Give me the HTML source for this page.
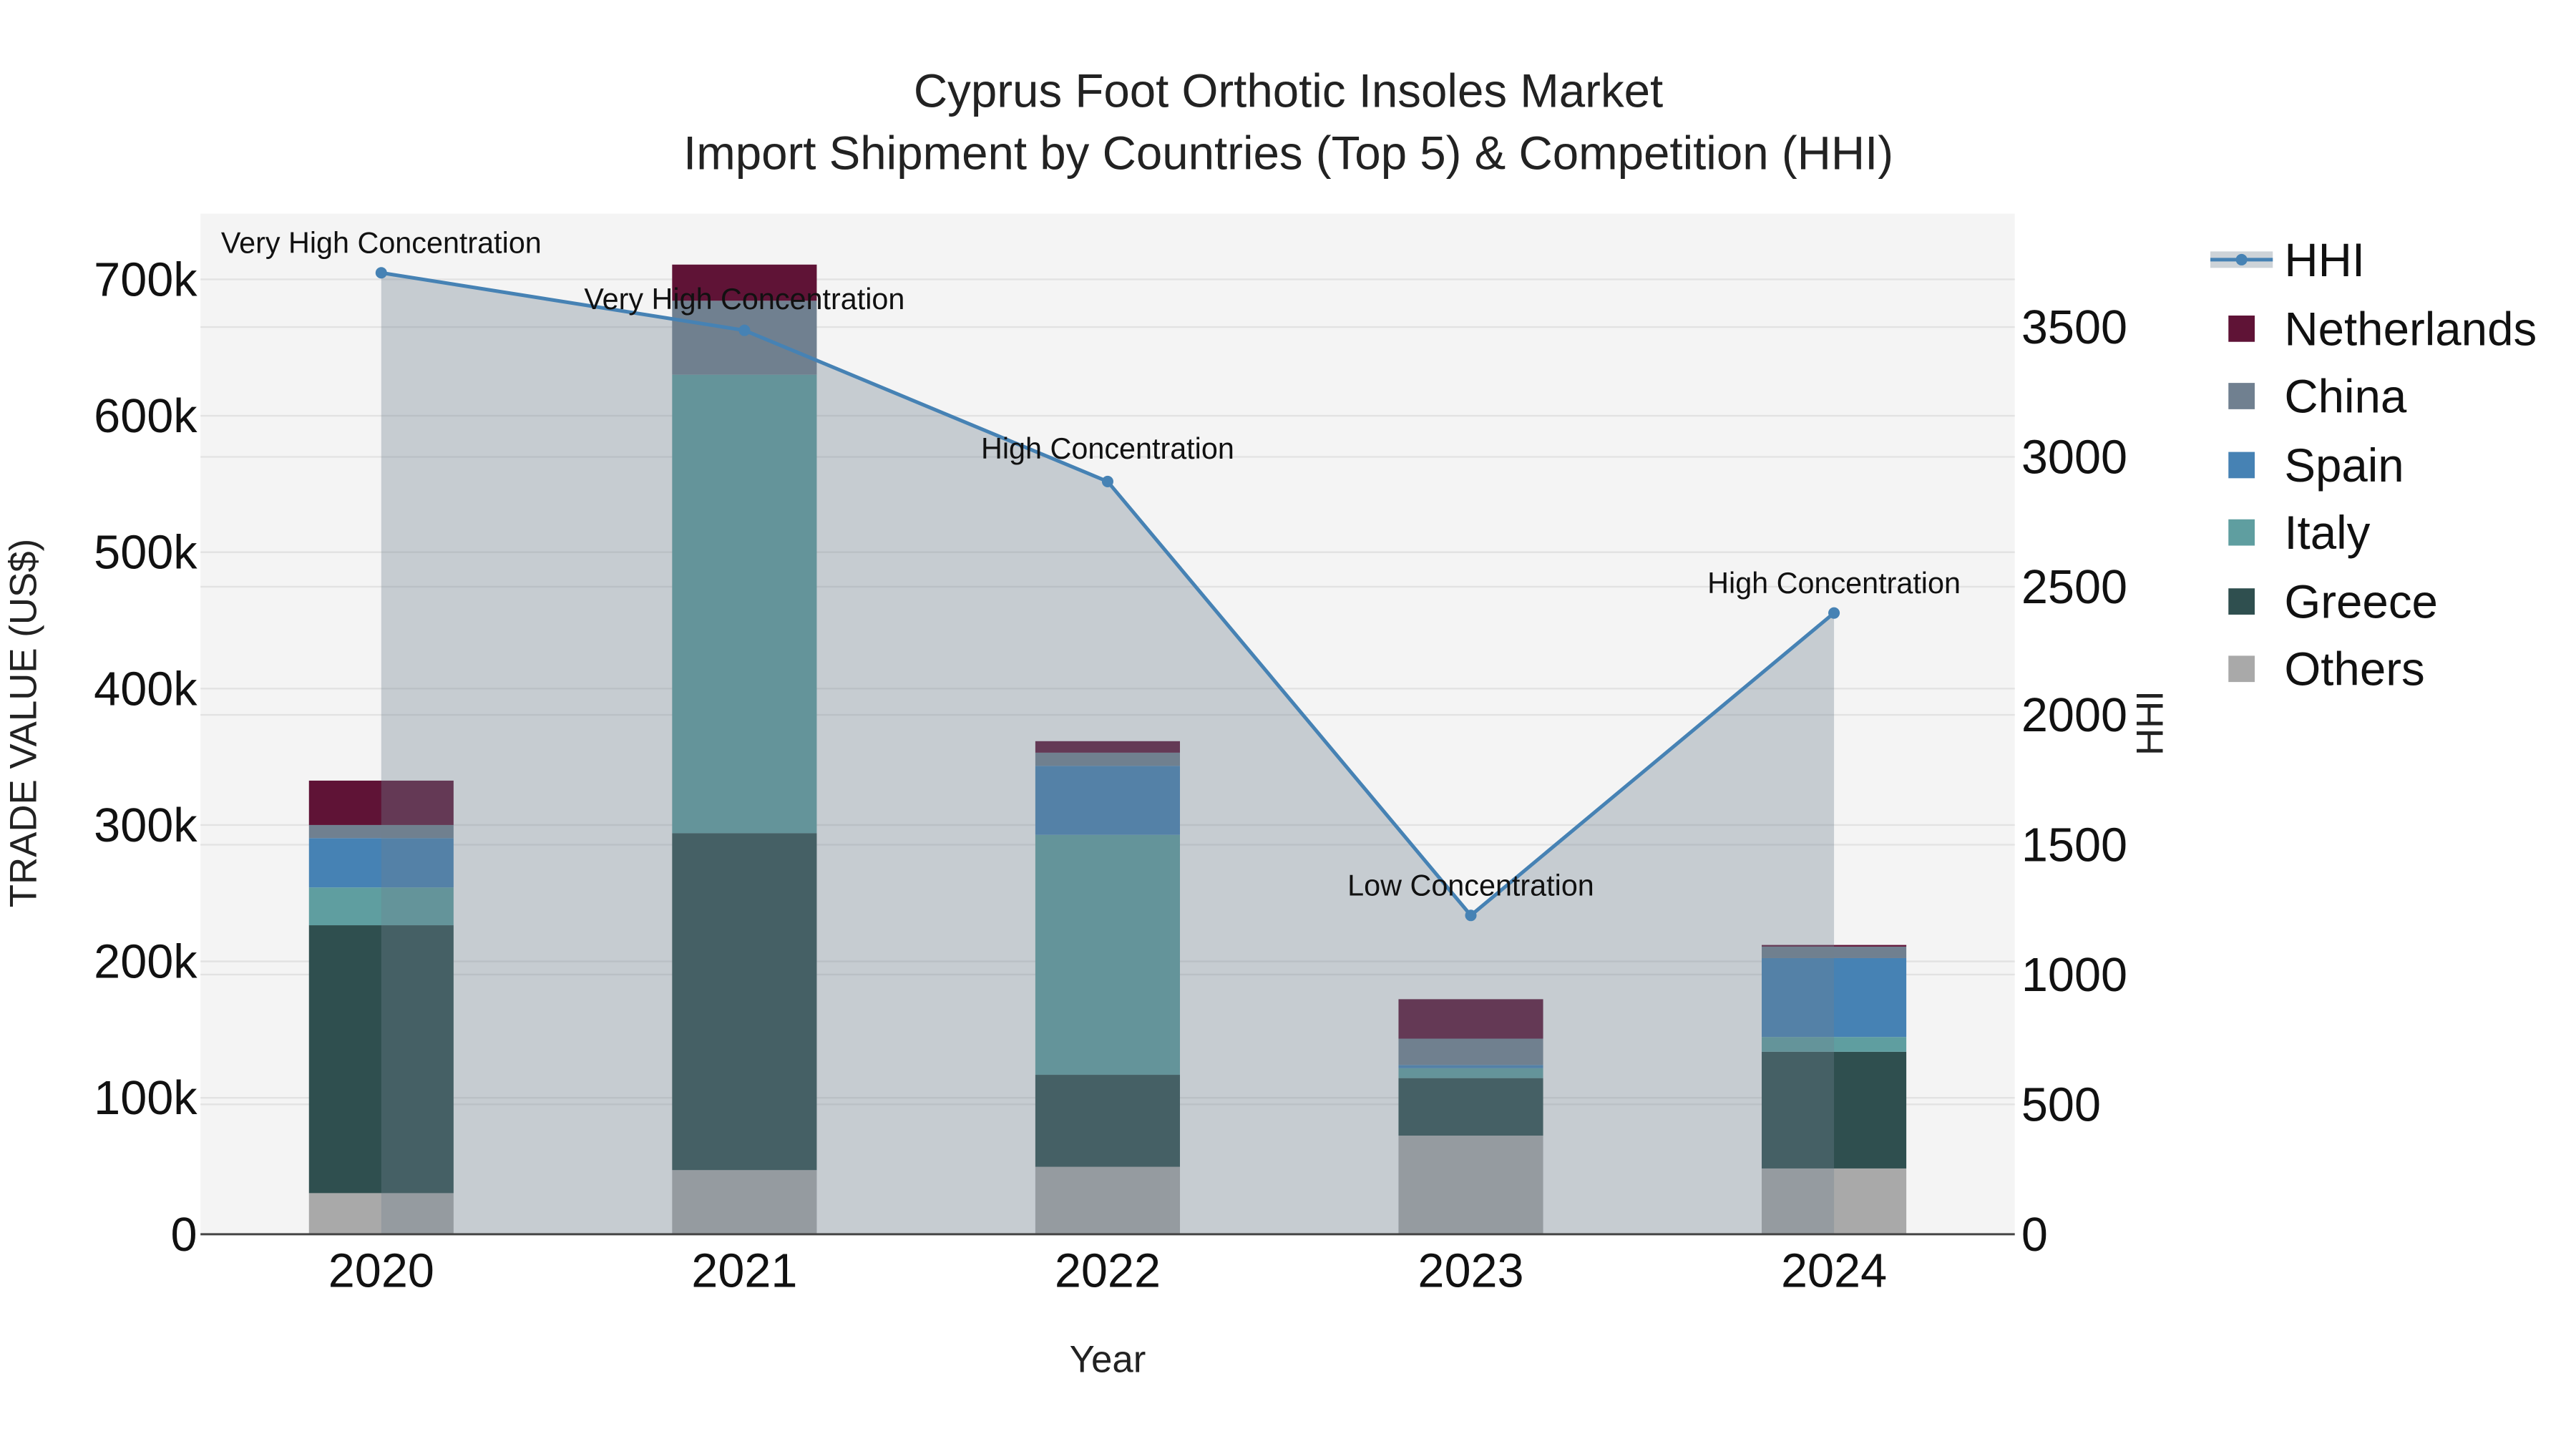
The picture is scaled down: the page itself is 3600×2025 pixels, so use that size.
<!DOCTYPE html>
<html><head><meta charset="utf-8"><style>
html,body{margin:0;padding:0;background:#fff;}
svg{display:block;font-family:"Liberation Sans",Arial,sans-serif;}
</style></head><body>
<svg width="3600" height="2025" viewBox="0 0 1567.5 881.7" preserveAspectRatio="none" xmlns="http://www.w3.org/2000/svg">
<rect x="0" y="0" width="1567.5" height="881.7" fill="#fff"/>
<rect x="122" y="130" width="1104" height="621" fill="#f4f4f4"/>
<g stroke="#e2e2e2" stroke-width="1">
<line x1="122" x2="1226" y1="668" y2="668"/><line x1="122" x2="1226" y1="585" y2="585"/>
<line x1="122" x2="1226" y1="502" y2="502"/><line x1="122" x2="1226" y1="419" y2="419"/>
<line x1="122" x2="1226" y1="336" y2="336"/><line x1="122" x2="1226" y1="253" y2="253"/>
<line x1="122" x2="1226" y1="170" y2="170"/>
<line x1="122" x2="1226" y1="672" y2="672"/><line x1="122" x2="1226" y1="593" y2="593"/>
<line x1="122" x2="1226" y1="514" y2="514"/><line x1="122" x2="1226" y1="435" y2="435"/>
<line x1="122" x2="1226" y1="357" y2="357"/><line x1="122" x2="1226" y1="278" y2="278"/>
<line x1="122" x2="1226" y1="199" y2="199"/>
</g>
<g>
<rect x="188" y="726" width="88" height="25" fill="#a9a9a9"/>
<rect x="188" y="563" width="88" height="163" fill="#2f4f4f"/>
<rect x="188" y="540" width="88" height="23" fill="#5f9ea0"/>
<rect x="188" y="510" width="88" height="30" fill="#4682b4"/>
<rect x="188" y="502" width="88" height="8" fill="#708090"/>
<rect x="188" y="475" width="88" height="27" fill="#5f1336"/>

<rect x="409" y="712" width="88" height="39" fill="#a9a9a9"/>
<rect x="409" y="507" width="88" height="205" fill="#2f4f4f"/>
<rect x="409" y="228" width="88" height="279" fill="#5f9ea0"/>
<rect x="409" y="183" width="88" height="45" fill="#708090"/>
<rect x="409" y="161" width="88" height="22" fill="#5f1336"/>

<rect x="630" y="710" width="88" height="41" fill="#a9a9a9"/>
<rect x="630" y="654" width="88" height="56" fill="#2f4f4f"/>
<rect x="630" y="508" width="88" height="146" fill="#5f9ea0"/>
<rect x="630" y="466" width="88" height="42" fill="#4682b4"/>
<rect x="630" y="458" width="88" height="8" fill="#708090"/>
<rect x="630" y="451" width="88" height="7" fill="#5f1336"/>

<rect x="851" y="691" width="88" height="60" fill="#a9a9a9"/>
<rect x="851" y="656" width="88" height="35" fill="#2f4f4f"/>
<rect x="851" y="650" width="88" height="6" fill="#5f9ea0"/>
<rect x="851" y="648" width="88" height="2" fill="#4682b4"/>
<rect x="851" y="632" width="88" height="16" fill="#708090"/>
<rect x="851" y="608" width="88" height="24" fill="#5f1336"/>

<rect x="1072" y="711" width="88" height="40" fill="#a9a9a9"/>
<rect x="1072" y="640" width="88" height="71" fill="#2f4f4f"/>
<rect x="1072" y="631" width="88" height="9" fill="#5f9ea0"/>
<rect x="1072" y="583" width="88" height="48" fill="#4682b4"/>
<rect x="1072" y="576" width="88" height="7" fill="#708090"/>
<rect x="1072" y="575" width="88" height="1" fill="#5f1336"/>
</g>
<polygon points="232,751 232,166 453,201 674,293 895,557 1116,373 1116,751" fill="rgba(112,128,144,0.35)"/>
<polyline points="232,166 453,201 674,293 895,557 1116,373" fill="none" stroke="#4682b4" stroke-width="2.2"/>
<g fill="#4682b4">
<circle cx="232" cy="166" r="3.5"/><circle cx="453" cy="201" r="3.5"/><circle cx="674" cy="293" r="3.5"/><circle cx="895" cy="557" r="3.5"/><circle cx="1116" cy="373" r="3.5"/>
</g>
<line x1="122" x2="1226" y1="751" y2="751" stroke="#444" stroke-width="1.3"/>
<g font-size="18" fill="#111" text-anchor="middle">
<text x="232" y="154">Very High Concentration</text>
<text x="453" y="188">Very High Concentration</text>
<text x="674" y="279">High Concentration</text>
<text x="895" y="545">Low Concentration</text>
<text x="1116" y="361">High Concentration</text>
</g>
<g text-anchor="middle" fill="#222" font-size="28.5">
<text x="784" y="65">Cyprus Foot Orthotic Insoles Market</text>
<text x="784" y="103">Import Shipment by Countries (Top 5) &amp; Competition (HHI)</text>
</g>
<g text-anchor="end" font-size="29" fill="#111">
<text x="120" y="761">0</text><text x="120" y="678">100k</text><text x="120" y="595">200k</text>
<text x="120" y="512">300k</text><text x="120" y="429">400k</text><text x="120" y="346">500k</text>
<text x="120" y="263">600k</text><text x="120" y="180">700k</text>
</g>
<g text-anchor="start" font-size="29" fill="#111">
<text x="1230" y="761">0</text><text x="1230" y="682">500</text><text x="1230" y="603">1000</text>
<text x="1230" y="524">1500</text><text x="1230" y="445">2000</text><text x="1230" y="367">2500</text>
<text x="1230" y="288">3000</text><text x="1230" y="209">3500</text>
</g>
<g text-anchor="middle" font-size="29" fill="#111">
<text x="232" y="783">2020</text><text x="453" y="783">2021</text><text x="674" y="783">2022</text>
<text x="895" y="783">2023</text><text x="1116" y="783">2024</text>
</g>
<text x="674" y="835" text-anchor="middle" font-size="23" fill="#222">Year</text>
<text transform="translate(22,440) rotate(-90)" text-anchor="middle" font-size="23" fill="#222">TRADE VALUE (US$)</text>
<text transform="translate(1316,440) rotate(-90)" text-anchor="middle" font-size="23" fill="#222">HHI</text>
<rect x="1345" y="153" width="38" height="10" fill="rgba(112,128,144,0.35)"/>
<line x1="1345" x2="1383" y1="158" y2="158" stroke="#4682b4" stroke-width="2.2"/>
<circle cx="1364" cy="158" r="3.5" fill="#4682b4"/>
<rect x="1356" y="192" width="16" height="16" fill="#5f1336"/>
<rect x="1356" y="233" width="16" height="16" fill="#708090"/>
<rect x="1356" y="275" width="16" height="16" fill="#4682b4"/>
<rect x="1356" y="316" width="16" height="16" fill="#5f9ea0"/>
<rect x="1356" y="358" width="16" height="16" fill="#2f4f4f"/>
<rect x="1356" y="399" width="16" height="16" fill="#a9a9a9"/>
<g font-size="28.5" fill="#111">
<text x="1390" y="168">HHI</text>
<text x="1390" y="210">Netherlands</text>
<text x="1390" y="251">China</text>
<text x="1390" y="293">Spain</text>
<text x="1390" y="334">Italy</text>
<text x="1390" y="376">Greece</text>
<text x="1390" y="417">Others</text>
</g>
</svg>
</body></html>
